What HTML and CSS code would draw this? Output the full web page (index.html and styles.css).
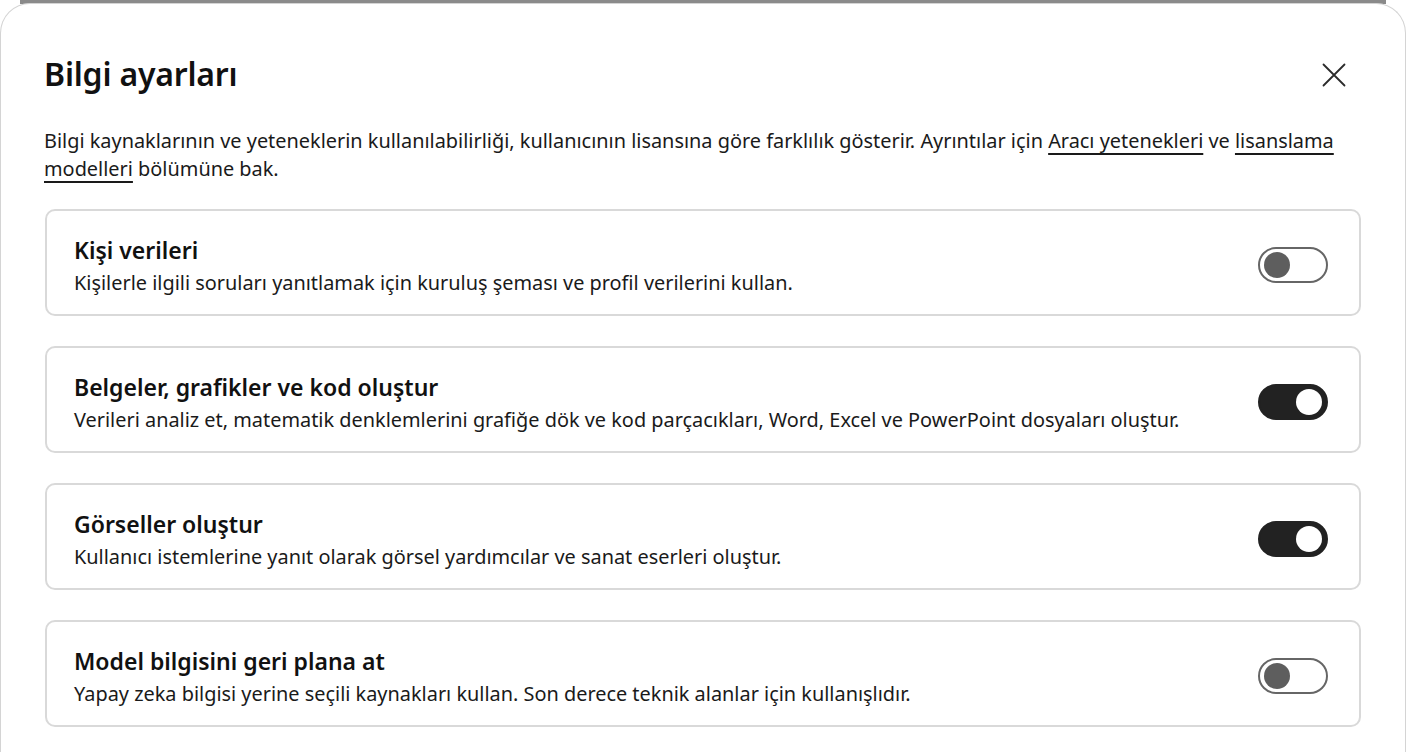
FILE: index.html
```html
<!DOCTYPE html>
<html lang="tr">
<head>
<meta charset="utf-8">
<title>Bilgi ayarları</title>
<link rel="stylesheet" href="styles.css">
</head>
<body>
<div class="dialog">
  <header class="dialog-header">
    <h1 class="dialog-title">Bilgi ayarları</h1>
    <button class="close-btn" aria-label="Kapat">
      <svg width="24" height="24" viewBox="0 0 24 24" aria-hidden="true"><path d="M1.5 1.5 L22.5 22.5 M22.5 1.5 L1.5 22.5" stroke="#2b2b2b" stroke-width="1.8" fill="none" stroke-linecap="round"/></svg>
    </button>
  </header>
  <p class="intro">Bilgi kaynaklarının ve yeteneklerin kullanılabilirliği, kullanıcının lisansına göre farklılık gösterir. Ayrıntılar için <a href="#">Aracı yetenekleri</a> ve <a href="#">lisanslama modelleri</a> bölümüne bak.</p>
  <div class="cards">
    <div class="card">
      <div class="card-text">
        <div class="card-title">Kişi verileri</div>
        <div class="card-desc">Kişilerle ilgili soruları yanıtlamak için kuruluş şeması ve profil verilerini kullan.</div>
      </div>
      <span class="toggle"><span class="knob"></span></span>
    </div>
    <div class="card">
      <div class="card-text">
        <div class="card-title">Belgeler, grafikler ve kod oluştur</div>
        <div class="card-desc">Verileri analiz et, matematik denklemlerini grafiğe dök ve kod parçacıkları, Word, Excel ve PowerPoint dosyaları oluştur.</div>
      </div>
      <span class="toggle on"><span class="knob"></span></span>
    </div>
    <div class="card">
      <div class="card-text">
        <div class="card-title">Görseller oluştur</div>
        <div class="card-desc">Kullanıcı istemlerine yanıt olarak görsel yardımcılar ve sanat eserleri oluştur.</div>
      </div>
      <span class="toggle on"><span class="knob"></span></span>
    </div>
    <div class="card">
      <div class="card-text">
        <div class="card-title">Model bilgisini geri plana at</div>
        <div class="card-desc">Yapay zeka bilgisi yerine seçili kaynakları kullan. Son derece teknik alanlar için kullanışlıdır.</div>
      </div>
      <span class="toggle"><span class="knob"></span></span>
    </div>
  </div>
</div>
</body>
</html>
```

FILE: styles.css
```css
html, body {
  margin: 0;
  padding: 0;
}
body {
  width: 1406px;
  height: 752px;
  overflow: hidden;
  font-family: "Noto Sans", "Open Sans", sans-serif;
  color: #1a1a1a;
  background: #ffffff linear-gradient(#8a8a8a, #8a8a8a) no-repeat 20px 0 / 1366px 4px;
  padding-top: 3px;
  box-sizing: border-box;
}
.dialog {
  background: #fff;
  border: 1px solid #d4d4d4;
  border-bottom: none;
  border-radius: 30px 30px 0 0;
  height: 760px;
  box-sizing: border-box;
  padding: 0 44px 0 43px;
}
.dialog-header {
  display: flex;
  align-items: center;
  justify-content: space-between;
  padding-top: 48px;
}
.dialog-title {
  margin: 0;
  font-size: 32px;
  line-height: 44px;
  font-weight: 600;
  letter-spacing: -0.2px;
  color: #111;
}
.close-btn {
  background: none;
  border: none;
  padding: 0;
  margin-right: 15px;
  margin-top: 2px;
  width: 24px;
  height: 24px;
  display: flex;
}
.intro {
  margin: 31px 0 0;
  font-size: 19.9px;
  line-height: 28px;
  color: #1a1a1a;
  padding-right: 10px;
}
.intro a {
  color: #1a1a1a;
  text-decoration: underline;
  text-underline-offset: 5px;
  text-decoration-thickness: 1.6px;
}
.cards {
  display: flex;
  flex-direction: column;
  gap: 30px;
  margin-top: 26px;
  margin-left: 1px;
  width: 1316px;
}
.card {
  display: flex;
  align-items: center;
  justify-content: space-between;
  height: 107px;
  flex-shrink: 0;
  box-sizing: border-box;
  border: 2px solid #d9d9d9;
  border-radius: 10px;
  padding: 8px 31px 0 27px;
}
.card-title {
  font-size: 23px;
  line-height: 32px;
  font-weight: 600;
  color: #111;
}
.card-desc {
  font-size: 19.9px;
  line-height: 34px;
  color: #1a1a1a;
}
.toggle {
  width: 70px;
  height: 36px;
  box-sizing: border-box;
  border: 2px solid #666;
  border-radius: 18px;
  display: flex;
  align-items: center;
  padding: 0 4px;
  flex-shrink: 0;
  margin-bottom: 4px;
}
.knob {
  width: 26px;
  height: 26px;
  border-radius: 50%;
  background: #5e5e5e;
}
.toggle.on {
  background: #222;
  border-color: #222;
  justify-content: flex-end;
}
.toggle.on .knob {
  background: #fff;
}
```
